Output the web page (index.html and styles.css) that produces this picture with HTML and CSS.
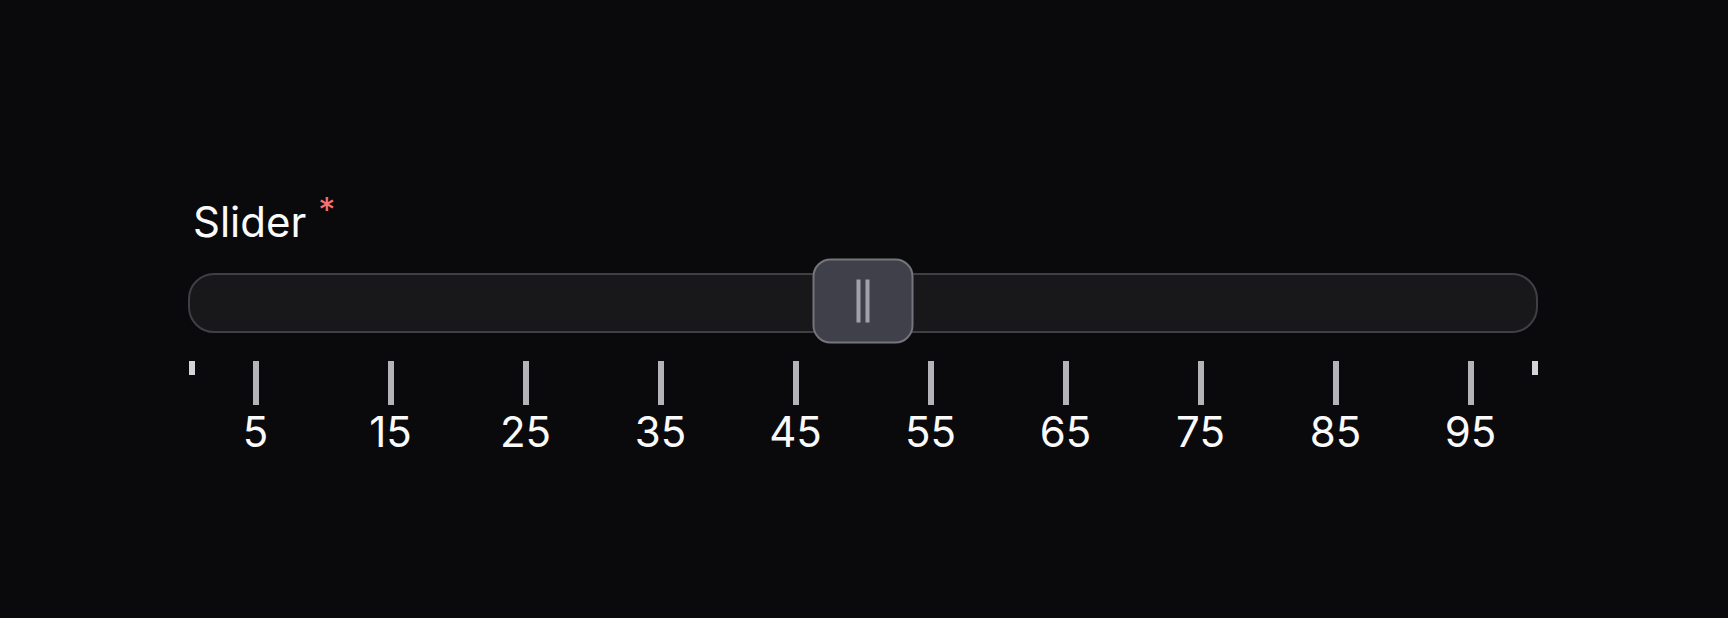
FILE: index.html
```html
<!DOCTYPE html>
<html lang="en">
<head>
  <meta charset="UTF-8">
  <title>Slider</title>
  <link rel="stylesheet" href="styles.css">
</head>
<body>
  <div class="field">
    <label class="field-label">Slider <span class="required">*</span></label>

    <div class="track">
      <div class="thumb">
        <span class="grip"></span>
        <span class="grip"></span>
      </div>
    </div>

    <div class="scale">
      <span class="edge edge-start"></span>
      <div class="mark"><span class="tick"></span><span class="value">5</span></div>
      <div class="mark"><span class="tick"></span><span class="value">15</span></div>
      <div class="mark"><span class="tick"></span><span class="value">25</span></div>
      <div class="mark"><span class="tick"></span><span class="value">35</span></div>
      <div class="mark"><span class="tick"></span><span class="value">45</span></div>
      <div class="mark"><span class="tick"></span><span class="value">55</span></div>
      <div class="mark"><span class="tick"></span><span class="value">65</span></div>
      <div class="mark"><span class="tick"></span><span class="value">75</span></div>
      <div class="mark"><span class="tick"></span><span class="value">85</span></div>
      <div class="mark"><span class="tick"></span><span class="value">95</span></div>
      <span class="edge edge-end"></span>
    </div>
  </div>
</body>
</html>
```

FILE: styles.css
```css
body {
  background: #0a0a0c;
  font-family: Inter, "Noto Sans", sans-serif;
  color: #fafafa;
  margin: 0;
}

.field {
  width: 1350px;
  padding: 201px 0 0 188px;
}

.field-label {
  display: block;
  font-size: 42px;
  line-height: 42px;
  padding-left: 5px;
}

.required {
  color: #f87171;
  font-size: 34px;
  vertical-align: top;
  position: relative;
  top: -12px;
  margin-left: 0;
}

.track {
  position: relative;
  box-sizing: border-box;
  height: 60px;
  margin-top: 30px;
  background: #18181b;
  border: 2px solid #3f3f46;
  border-radius: 26px;
}

/* thumb sits a touch above the track's centre line */
.thumb {
  position: absolute;
  left: 50%;
  top: 50%;
  transform: translate(-50%, calc(-50% - 2px));
  box-sizing: border-box;
  width: 101px;
  height: 85px;
  background: #40404a;
  border: 2px solid #74747c;
  border-radius: 18px;
  display: flex;
  justify-content: center;
  align-items: center;
  gap: 5px;
}

.grip {
  width: 4px;
  height: 43px;
  background: #a1a1aa;
}

.scale {
  position: relative;
  display: grid;
  grid-template-columns: repeat(10, 1fr);
  margin-top: 28px;
}

.mark {
  display: flex;
  flex-direction: column;
  align-items: center;
}

.tick {
  width: 6px;
  height: 44px;
  background: #b4b4b8;
}

.value {
  margin-top: 6px;
  font-size: 42px;
  line-height: 42px;
}

.edge {
  position: absolute;
  top: 0;
  width: 6px;
  height: 14px;
  background: #d4d4d8;
}

.edge-start {
  left: 1px;
}

.edge-end {
  right: 0;
}
```
